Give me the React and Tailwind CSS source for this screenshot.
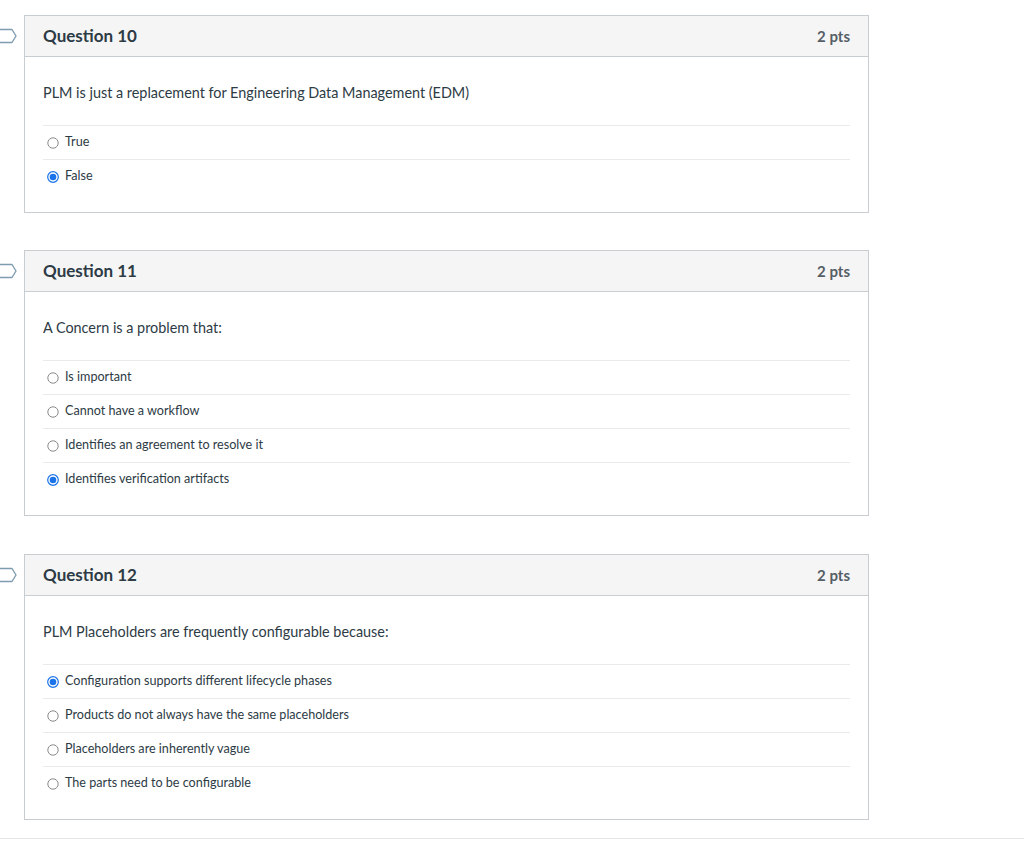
import React from "react";

const questions = [
  {
    title: "Question 10",
    pts: "2 pts",
    text: "PLM is just a replacement for Engineering Data Management (EDM)",
    answers: ["True", "False"],
    selected: 1,
    gap: "mb-[37px]",
  },
  {
    title: "Question 11",
    pts: "2 pts",
    text: "A Concern is a problem that:",
    answers: [
      "Is important",
      "Cannot have a workflow",
      "Identifies an agreement to resolve it",
      "Identifies verification artifacts",
    ],
    selected: 3,
    gap: "mb-[38px]",
  },
  {
    title: "Question 12",
    pts: "2 pts",
    text: "PLM Placeholders are frequently configurable because:",
    answers: [
      "Configuration supports different lifecycle phases",
      "Products do not always have the same placeholders",
      "Placeholders are inherently vague",
      "The parts need to be configurable",
    ],
    selected: 0,
    gap: "mb-[18px]",
  },
];

function Radio({ checked }) {
  if (checked) {
    return (
      <svg width="12" height="12" viewBox="0 0 12 12" className="shrink-0">
        <circle cx="6" cy="6" r="5.3" fill="white" stroke="#1a73e8" strokeWidth="1.2" />
        <circle cx="6" cy="6" r="3.3" fill="#1a73e8" />
      </svg>
    );
  }
  return (
    <svg width="12" height="12" viewBox="0 0 12 12" className="shrink-0">
      <circle cx="6" cy="6" r="5.2" fill="white" stroke="#8a8a8a" strokeWidth="1" />
    </svg>
  );
}

function Flag() {
  return (
    <svg width="18" height="16" viewBox="0 0 18 16" className="absolute left-[-25px] top-[12px]">
      <path d="M-2 1.5 H12 L16 8 L12 14.5 H-2" fill="white" stroke="#7f9db0" strokeWidth="1.4" strokeLinejoin="round" />
    </svg>
  );
}

function QuestionCard({ q }) {
  return (
    <div className={`relative w-[845px] border border-[#c7cdd1] bg-white ${q.gap}`}>
      <Flag />
      <div className="flex items-center justify-between h-[41px] bg-[#f5f5f5] border-b border-[#c7cdd1] px-[18px]">
        <span className="text-[17px] font-bold text-[#2d3b45]">{q.title}</span>
        <span className="text-[15px] font-bold text-[#555e66]">{q.pts}</span>
      </div>
      <div className="px-[18px] pt-[26px] pb-[19px]">
        <p className="text-[14.4px] leading-[20px] text-[#2d3b45] mb-[22px]">{q.text}</p>
        <div>
          {q.answers.map((a, i) => (
            <div key={i} className="flex items-center h-[34px] border-t border-[#e8eaec] pl-[4px] gap-[6px]">
              <Radio checked={i === q.selected} />
              <span className="text-[12.6px] leading-[16px] pb-[2px] text-[#2d3b45]">{a}</span>
            </div>
          ))}
        </div>
      </div>
    </div>
  );
}

export default function App() {
  return (
    <div className="min-h-[841px] bg-white font-['Lato',sans-serif]">
      <div className="pt-[15px] pl-[24px] flex flex-col">
        {questions.map((q, i) => (
          <QuestionCard key={i} q={q} />
        ))}
      </div>
      <div className="border-t border-[#e6e6e6]" />
    </div>
  );
}
